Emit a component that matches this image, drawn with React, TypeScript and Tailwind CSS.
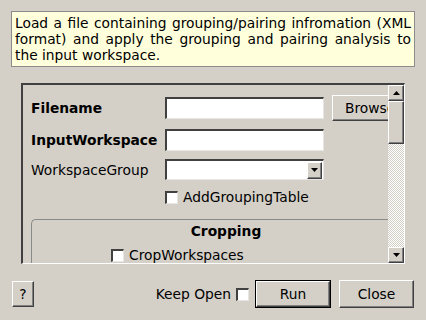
import React from "react";

const raised =
  "border border-t-white border-l-white border-b-[#404040] border-r-[#404040] shadow-[inset_-1px_-1px_0_#808080]";
const sunken =
  "border-t-2 border-l-2 border-r border-b border-t-[#404040] border-l-[#404040] border-r-[#e8e6e2] border-b-[#e8e6e2]";

function Arrow({ up }: { up?: boolean }) {
  return (
    <svg width="7" height="4" viewBox="0 0 7 4">
      {up ? <polygon points="3.5,0 7,4 0,4" fill="#000" /> : <polygon points="0,0 7,0 3.5,4" fill="#000" />}
    </svg>
  );
}

function CheckBox() {
  return <div className={`w-[13px] h-[13px] bg-white shrink-0 ${sunken}`} />;
}

function Field({ combo }: { combo?: boolean }) {
  return (
    <div
      className={`w-[159px] shrink-0 ${combo ? "h-[21px]" : "h-[22px]"} bg-white flex justify-end items-center pr-[1px] ${sunken}`}
    >
      {combo && (
        <div className={`w-[15px] h-[17px] bg-[#d4d0c8] flex items-center justify-center ${raised}`}>
          <Arrow />
        </div>
      )}
    </div>
  );
}

export default function App() {
  return (
    <div className="w-[426px] h-[320px] bg-[#d4d0c8] pt-[11px] px-[11px] text-[13.8px] leading-[16px] text-black font-['DejaVu_Sans',sans-serif]">
      {/* description */}
      <div className="w-[404px] h-[56px] bg-[#ffffdc] border border-[#8c8c8c] pl-[3px] pr-[3px] pt-[3px] text-justify">
        Load a file containing grouping/pairing infromation (XML format) and apply the grouping and pairing analysis to
        the input workspace.
      </div>

      {/* scroll area */}
      <div className="ml-[10px] mt-[16px] w-[384px] h-[181px] flex border-t-2 border-l-2 border-t-[#404040] border-l-[#404040] border-r border-b border-r-white border-b-white">
        <div className="w-[365px] shrink-0 overflow-hidden pl-[8px] pt-[10px]">
          <div className="flex items-center h-[26px]">
            <div className="w-[134px] shrink-0 font-bold">Filename</div>
            <Field />
            <div className={`ml-[8px] w-[78px] h-[26px] shrink-0 pl-[12px] flex items-center ${raised}`}>Browse</div>
          </div>
          <div className="flex items-center h-[26px] mt-[6px]">
            <div className="w-[134px] shrink-0 font-bold">InputWorkspace</div>
            <Field />
          </div>
          <div className="flex items-center h-[21px] mt-[6px]">
            <div className="w-[134px] shrink-0">WorkspaceGroup</div>
            <Field combo />
          </div>
          <div className="flex items-center h-[14px] mt-[10px] pl-[134px] gap-[5px]">
            <CheckBox />
            <span>AddGroupingTable</span>
          </div>
          {/* group box */}
          <div className="mt-[15px] w-[389px] h-[60px] shrink-0 border-t border-l border-[#8a8a8a] rounded-tl-[5px] pt-[3px]">
            <div className="text-center font-bold">Cropping</div>
            <div className="flex items-center gap-[5px] pl-[79px] mt-[8px]">
              <CheckBox />
              <span>CropWorkspaces</span>
            </div>
          </div>
        </div>
        {/* scrollbar */}
        <div className="w-[16px] shrink-0 flex flex-col">
          <div className={`h-[16px] bg-[#d4d0c8] flex items-center justify-center ${raised}`}>
            <Arrow up />
          </div>
          <div className={`h-[43px] bg-[#d4d0c8] ${raised}`} />
          <div className="flex-1 bg-[image:repeating-conic-gradient(#ffffff_0_25%,#d4d0c8_0_50%)] bg-[length:2px_2px]" />
          <div className={`h-[16px] bg-[#d4d0c8] flex items-center justify-center ${raised}`}>
            <Arrow />
          </div>
        </div>
      </div>

      {/* bottom bar */}
      <div className="mt-[16px] flex items-center h-[28px]">
        <div className={`ml-[1px] w-[22px] h-[26px] flex items-center justify-center ${raised}`}>?</div>
        <div className="ml-auto flex items-center gap-[5px]">
          <span>Keep Open</span>
          <CheckBox />
        </div>
        <div className="ml-[6px] w-[76px] h-[28px] border border-black">
          <div className={`w-full h-full flex items-center justify-center ${raised}`}>Run</div>
        </div>
        <div className={`ml-[8px] mr-[1px] w-[75px] h-[28px] flex items-center justify-center ${raised}`}>Close</div>
      </div>
    </div>
  );
}
